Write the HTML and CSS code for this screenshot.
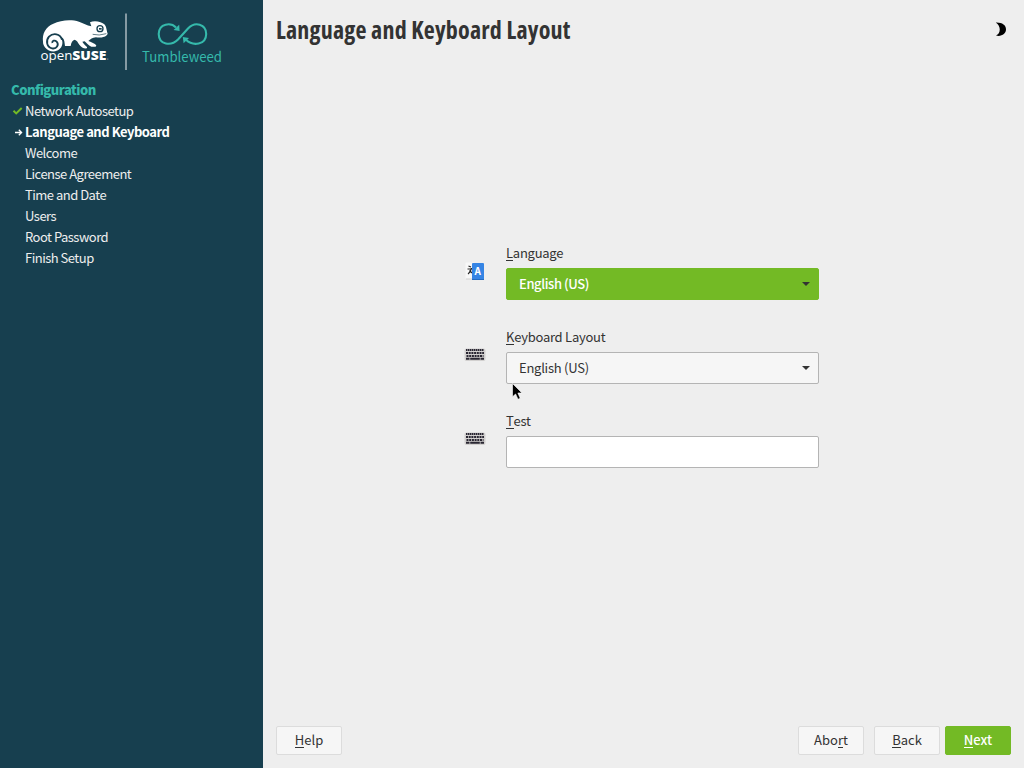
FILE: index.html
```html
<!DOCTYPE html>
<html lang="en">
<head>
<meta charset="utf-8">
<title>Language and Keyboard Layout</title>
<link rel="stylesheet" href="styles.css">
</head>
<body>
<div class="installer">
  <aside class="sidebar">
    <svg class="brand" width="263" height="80" viewBox="0 0 263 80">
      <g transform="translate(30 5) scale(.33333)">
        <path fill="#fff" d="M39 110C36 86 47 65 70 56C92 45 124 42 147 50C160 54 170 61 184 64L180 52C194 45 216 51 223 58C230 65 230 79 233 86C229 96 213 99 198 97C187 98 181 103 175 108C183 111 192 114 199 121L197 125H184C175 121 169 114 164 109L157 110C161 116 165 121 171 126V130C162 132 154 127 148 119C144 113 140 105 134 104C127 106 124 111 122 123H105L103 109C101 100 97 97 93 98C101 112 97 125 88 133C75 144 55 139 46 128C41 122 39 117 39 110Z"/>
        <path fill="none" stroke="#173f4f" stroke-width="5.500" d="M96 104C91 85 69 83 57 95C46 108 51 127 66 130C80 133 88 119 80 110C74 104 66 107 67 114"/>
        <circle cx="210" cy="71" r="9" fill="none" stroke="#173f4f" stroke-width="4"/>
        <path d="M207 69h8v5h-8z" fill="#173f4f"/>
        <path d="M188 88Q207 93 229 86" fill="none" stroke="#173f4f" stroke-width="2"/>
      </g>
      <text x="40.5" y="60" textLength="66" lengthAdjust="spacingAndGlyphs"><tspan class="brand-open">open</tspan><tspan class="brand-suse">SUSE</tspan></text>
      <circle cx="107.8" cy="59" r=".6" fill="#a6b6bc"/>
      <path d="M126 13.5V70" stroke="#a3b2b9" stroke-width="1.6"/>
      <g fill="none" stroke="#35b9ab" stroke-width="2.1">
        <path d="M176 27.4C171 22.4 159 23 158.700 34C159 45 171 46.500 178 39.500L188 28.500C195 21 206.200 24 206.200 34C206 45 193 46.500 186 39.800"/>
      </g>
      <path fill="#35b9ab" d="M179.600 31L179.200 24.800L173.600 29.900ZM182.800 37L189 38L183.600 43.200Z"/>
      <text class="brand-product" x="142" y="61.500" textLength="80" lengthAdjust="spacingAndGlyphs">Tumbleweed</text>
    </svg>
    <h2 class="steps-title">Configuration</h2>
    <ol class="steps">
      <li><svg class="mark" width="14" height="21"><path d="M2.500 10.800L5.200 13.400L10.700 8" fill="none" stroke="#73ba25" stroke-width="2"/></svg><span>Network Autosetup</span></li>
      <li class="current"><svg class="mark" width="14" height="21"><path d="M4 11.500H10.500M7.800 8.700L10.600 11.500L7.800 14.300" fill="none" stroke="#fff" stroke-width="1.300"/></svg><span>Language and Keyboard</span></li>
      <li><i class="mark"></i><span>Welcome</span></li>
      <li><i class="mark"></i><span>License Agreement</span></li>
      <li><i class="mark"></i><span>Time and Date</span></li>
      <li><i class="mark"></i><span>Users</span></li>
      <li><i class="mark"></i><span>Root Password</span></li>
      <li><i class="mark"></i><span>Finish Setup</span></li>
    </ol>
  </aside>
  <main class="main">
    <header class="header">
      <h1 class="title">Language and Keyboard Layout</h1>
      <svg class="moon" width="12" height="15" viewBox="0 0 12 15"><path d="M.8.500C7 .200 11 3 11 7.300C11 12 6.500 14.800 1 13.600C6 11.500 6.200 4 .8.500Z" fill="#000"/></svg>
    </header>
    <form class="form">
      <div class="row">
        <svg class="icon" width="22" height="20" viewBox="0 0 22 20"><rect x="1.500" y="1.500" width="9" height="16.500" rx="1" fill="#f8f8f8"/><path d="M2 18H9" stroke="#d0d0d0"/><path d="M4.500 5L7 6M3.500 8H8M7.500 7C7 10 5.500 12 4 13M5.500 9.500L8 12" fill="none" stroke="#252525" stroke-width="1.200"/><rect x="8" y="2" width="12" height="17" rx="1" fill="#3584e4"/><path d="M8 18.500H20" stroke="#246bc1"/><text class="icon-letter" x="10.400" y="14.300">A</text></svg>
        <div class="field"><label><u>L</u>anguage</label><div class="combo active"><span>English (US)</span><i class="arrow"></i></div></div>
      </div>
      <div class="row">
        <svg class="icon" width="22" height="20" viewBox="0 0 22 20"><rect x=".5" y="3.500" width="21" height="12.500" rx="2" fill="#d2d0cf"/><g stroke="#292632"><path d="M2 5H20" stroke-width="2" stroke-dasharray="1.500 .5"/><path d="M2 8H20M2.500 11H19.500" stroke-width="2" stroke-dasharray="2 .7"/><path d="M2 13.800H5.500M6.200 13.800H15.800M16.500 13.800H20" stroke-width="2"/></g></svg>
        <div class="field"><label><u>K</u>eyboard Layout</label><div class="combo"><span>English (US)</span><i class="arrow"></i></div></div>
      </div>
      <div class="row">
        <svg class="icon" width="22" height="20" viewBox="0 0 22 20"><rect x=".5" y="3.500" width="21" height="12.500" rx="2" fill="#d2d0cf"/><g stroke="#292632"><path d="M2 5H20" stroke-width="2" stroke-dasharray="1.500 .5"/><path d="M2 8H20M2.500 11H19.500" stroke-width="2" stroke-dasharray="2 .7"/><path d="M2 13.800H5.500M6.200 13.800H15.800M16.500 13.800H20" stroke-width="2"/></g></svg>
        <div class="field"><label><u>T</u>est</label><input class="input" type="text" aria-label="Test"></div>
      </div>
    </form>
    <footer class="footer">
      <button class="btn help" type="button"><u>H</u>elp</button>
      <button class="btn" type="button">Abo<u>r</u>t</button>
      <button class="btn back" type="button"><u>B</u>ack</button>
      <button class="btn primary" type="button"><u>N</u>ext</button>
    </footer>
  </main>
  <svg class="cursor" width="12" height="18" viewBox="0 0 12 18"><path d="M.5.500V13.800L3.600 11L6 16.300L8.200 15.300L5.900 10H10Z" fill="#000" stroke="#fff" stroke-width=".6"/></svg>
</div>
</body>
</html>
```
FILE: styles.css
```css
* { box-sizing: border-box; }
body { margin: 0; font-family: "Noto Sans CJK SC", "Noto Sans", sans-serif; font-size: 13px; color: #333; }
.installer { display: flex; width: 1024px; height: 768px; position: relative; overflow: hidden; background: #eee; }
.sidebar { width: 263px; background: #173f4f; color: #eee; }
.brand { display: block; margin-bottom: -1px; }
.brand-open, .brand-suse { font-family: "Open Sans", sans-serif; font-size: 12.5px; fill: #fff; }
.brand-suse { font-weight: 800; font-size: 13px; }
.brand-product { font-size: 14px; fill: #35b9ab; }
.steps-title { margin: 0 0 0 11px; font-size: 13px; line-height: 21px; font-weight: 900; letter-spacing: -.5px; color: #35b9ab; }
.steps { margin: 0; padding: 0 0 0 11px; list-style: none; letter-spacing: -.51px; }
.steps li { display: flex; height: 21px; line-height: 21px; white-space: nowrap; }
.steps .current { font-weight: 700; color: #fff; letter-spacing: -.46px; }
.mark { display: block; width: 14px; flex: none; }
.main { width: 761px; display: flex; flex-direction: column; padding: 0 13px; }
.header { height: 60px; display: flex; justify-content: space-between; align-items: flex-start; }
.title { margin: 11px 0 0; font: 700 24px/37px "Open Sans", sans-serif; font-stretch: 75%; letter-spacing: .2px; white-space: nowrap; }
.moon { margin: 22px 4px 0 0; }
.form { display: flex; flex-direction: column; gap: 28px; padding: 183px 0 0 188px; letter-spacing: -.25px; }
.row { display: flex; height: 56px; align-items: flex-start; }
.icon { width: 22px; margin: 18px 20px 0 0; flex: none; }
.icon-letter { font: 700 10px "Noto Sans CJK SC", sans-serif; letter-spacing: 0; fill: #fff; }
.field { width: 313px; }
label { display: block; height: 25px; line-height: 19px; }
u { text-decoration: none; border-bottom: 1px solid currentColor; display: inline-block; line-height: 15px; height: 16px; }
.combo { height: 32px; display: flex; align-items: center; justify-content: space-between; padding: 0 8px 2px 12px; background: #f6f6f6; border: 1px solid #b4b4b4; border-radius: 2px; }
.combo.active { background: #73ba25; border-color: #73ba25; color: #fff; font-weight: 500; letter-spacing: -.4px; }
.arrow { border: 4px solid transparent; border-top-color: #333; border-bottom: 0; margin-top: 2px; }
.input { display: block; width: 100%; height: 32px; border: 1px solid #b4b4b4; border-radius: 2px; background: #fff; padding: 0 12px; }
.footer { margin: auto 0 13px; display: flex; }
.btn { width: 66px; height: 29px; padding: 0 0 2px; font: inherit; color: #333; background: #f6f6f6; border: 1px solid #dcdcdc; border-radius: 2px; line-height: 19px; }
.help { margin-right: auto; }
.back { margin: 0 5px 0 10px; }
.primary { background: #73ba25; border-color: #73ba25; color: #fff; font-weight: 500; }
.cursor { position: absolute; left: 512px; top: 383px; }
```
